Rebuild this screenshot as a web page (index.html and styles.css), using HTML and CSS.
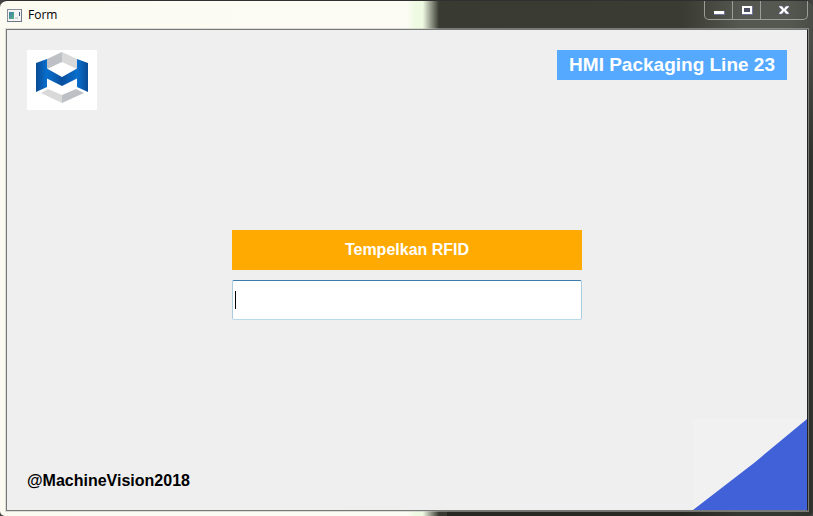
FILE: index.html
```html
<!DOCTYPE html>
<html lang="id">
<head>
<meta charset="utf-8">
<title>Form</title>
<link rel="stylesheet" href="styles.css">
</head>
<body>
<div class="window">
  <header class="titlebar">
    <svg class="app-icon" viewBox="0 0 15 13" aria-hidden="true">
      <defs>
        <linearGradient id="pane" x1="0" y1="0" x2="1" y2="1">
          <stop offset="0" stop-color="#3f7fae"/>
          <stop offset="1" stop-color="#59b083"/>
        </linearGradient>
      </defs>
      <rect x="0.5" y="0.5" width="14" height="12" fill="#f4f4f4" stroke="#8b8e94"/>
      <path d="M0 12.5h15M14.5 0v13" stroke="#6f7884"/>
      <rect x="2" y="3" width="5" height="7" fill="url(#pane)"/>
      <path d="M8 8h3v2H8z" fill="#d3d6da"/>
      <path d="M12 3h1v4h-1z" fill="#3c5f86"/>
    </svg>
    <span class="title">Form</span>
    <div class="controls">
      <button class="control" type="button" aria-label="Minimize">
        <svg viewBox="0 0 12 10" aria-hidden="true"><rect x="1" y="6" width="11" height="4" fill="#71749a"/><rect x="1" y="6" width="10" height="3" fill="#fff"/></svg>
      </button>
      <button class="control" type="button" aria-label="Maximize">
        <svg viewBox="0 0 12 10" aria-hidden="true"><path d="M1 1h11v9H1z" fill="#71749a"/><path d="M1 1h10v8H1z" fill="#fff"/><path d="M3 3h6v4H3z" fill="#4c4f60"/></svg>
      </button>
      <button class="control close" type="button" aria-label="Close">
        <svg viewBox="0 0 12 10" aria-hidden="true"><path d="M1 1h3l2 2.500L8 1h3v1L8 5l3 3v1H8L6 6.500 4 9H1V8l3-3-3-3z" fill="#fff" stroke="#71749a" stroke-width="0.500"/></svg>
      </button>
    </div>
  </header>
  <main class="client">
    <div class="top">
      <svg class="logo" viewBox="0 0 70 60" role="img" aria-label="Machine Vision">
        <defs>
          <linearGradient id="left" x1="0" x2="1">
            <stop offset="0" stop-color="#0b4a94"/>
            <stop offset="1" stop-color="#0870cf"/>
          </linearGradient>
          <linearGradient id="right" x1="0" x2="1">
            <stop offset="0" stop-color="#0870cf"/>
            <stop offset="1" stop-color="#0b4a94"/>
          </linearGradient>
          <linearGradient id="middle" x1="0" x2="1">
            <stop offset="0" stop-color="#0870cf"/>
            <stop offset="0.500" stop-color="#0a4f9e"/>
            <stop offset="1" stop-color="#0870cf"/>
          </linearGradient>
        </defs>
        <rect width="70" height="60" fill="#fff"/>
        <path d="M20 9 35 2v10l-15 7z" fill="#bdc0c4"/>
        <path d="M35 2l15 7v10l-15-7z" fill="#d9d9da"/>
        <path d="M14 43l7-4 14 6v8z" fill="#d9d9da"/>
        <path d="M35 45l14-6 8 4-22 10z" fill="#bdc0c4"/>
        <path d="M19 18l16 9 16-9v10L35 36l-16-8z" fill="url(#middle)"/>
        <path d="M9 13l11-4v28L9 42z" fill="url(#left)"/>
        <path d="M50 9l11 4v29l-11-5z" fill="url(#right)"/>
      </svg>
      <h1 class="banner">HMI Packaging Line 23</h1>
    </div>
    <form class="login">
      <label class="prompt" for="rfid">Tempelkan RFID</label>
      <input class="field" id="rfid" type="text" autocomplete="off">
    </form>
    <footer class="bottom">
      <span class="credit">@MachineVision2018</span>
      <svg class="corner" viewBox="0 0 114 91" aria-hidden="true">
        <rect width="114" height="91" fill="#f1f1f2"/>
        <path d="M0 91 61 44 114 0v91z" fill="#4161d8"/>
      </svg>
    </footer>
  </main>
</div>
</body>
</html>
```
FILE: styles.css
```css
* {
  box-sizing: border-box;
}

body {
  margin: 0;
  background: #444;
  font-family: "Liberation Sans", Arial, sans-serif;
}

.window {
  display: flex;
  flex-direction: column;
  min-height: 100vh;
  padding: 0 5px 5px 6px;
  border-top: 1px solid #303030;
  border-radius: 7px 7px 5px 5px;
  background:
    linear-gradient(transparent 40px, rgb(20 22 16 / 50%) 160px) right / 45% 100% no-repeat,
    linear-gradient(90deg, #fbfbf2 0, #fcfcf4 50%, #effae3 51%, #effae3 52%, #393a32 54%, #3a3b33 84%, #555850 91%, #555850 97%, #4a4d47 100%);
}

.titlebar {
  display: flex;
  align-items: center;
  height: 28px;
}

.app-icon {
  width: 15px;
  height: 13px;
  margin-left: 1px;
}

.title {
  flex: 1;
  margin-left: 6px;
  color: #000;
  font: 12px/16px "Open Sans", "Noto Sans", sans-serif;
}

.controls {
  display: flex;
  align-self: flex-start;
  height: 19px;
  border: 1px solid #9b9d98;
  border-top: 0;
  border-radius: 0 0 5px 5px;
}

.control {
  display: flex;
  align-items: center;
  justify-content: center;
  width: 28px;
  padding: 0;
  border: 0;
  border-right: 1px solid #9b9d98;
  background: transparent;
}

.control svg {
  width: 12px;
  height: 10px;
}

.close {
  width: 46px;
  border-right: 0;
}

.client {
  flex: 1;
  display: flex;
  flex-direction: column;
  justify-content: space-between;
  border: 1px solid #777a76;
  border-right-color: #222;
  outline: 1px solid rgb(190 190 190 / 50%);
  background: #efefef;
}

.top {
  display: flex;
  justify-content: space-between;
  align-items: flex-start;
  padding: 20px 20px 0;
}

.logo {
  width: 70px;
  height: 60px;
}

.banner {
  margin: 0;
  padding: 0 12px;
  background: #55aaff;
  color: #fff;
  font-size: 19px;
  line-height: 30px;
}

.login {
  display: flex;
  flex-direction: column;
  align-self: center;
  gap: 10px;
  width: 350px;
  padding-top: 20px;
}

.prompt {
  background: #ffaa00;
  color: #fff;
  font-size: 16px;
  font-weight: bold;
  line-height: 40px;
  text-align: center;
}

.field {
  height: 40px;
  padding: 0 3px;
  border: 1px solid #abcde4;
  border-top-color: #3d7bad;
  border-bottom-color: #b7d9ea;
  border-radius: 2px;
  outline: 0;
  background: linear-gradient(#000, #000) 2px 50% / 1px 18px no-repeat #fff;
  font: 16px "Liberation Sans", Arial, sans-serif;
}

.bottom {
  display: flex;
  justify-content: space-between;
  align-items: flex-end;
}

.credit {
  padding: 0 0 20px 20px;
  color: #000;
  font-size: 16px;
  font-weight: bold;
  line-height: 18px;
}

.corner {
  width: 114px;
  height: 91px;
}
```
